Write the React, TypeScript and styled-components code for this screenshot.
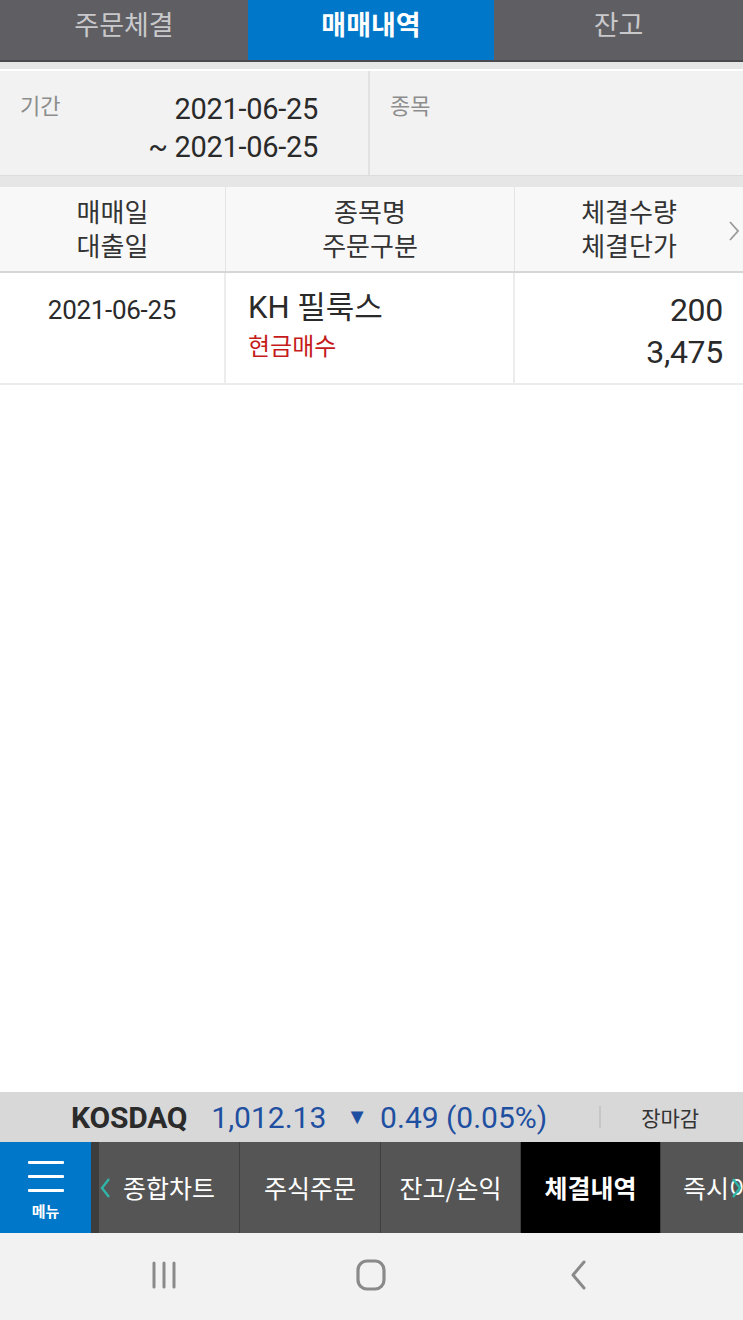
import React from "react";
import styled, { createGlobalStyle } from "styled-components";

const Global = createGlobalStyle`
  html, body { margin: 0; padding: 0; background: #ffffff; }
  body { font-family: Roboto, "Noto Sans CJK KR", sans-serif; }
  * { box-sizing: border-box; }
`;

const Page = styled.div`
  width: 743px;
  height: 1320px;
  display: flex;
  flex-direction: column;
  background: #ffffff;
  overflow: hidden;
`;

const TopTabs = styled.div`
  display: grid;
  grid-template-columns: 248px 246px 1fr;
  height: 62px;
  background: #5f5f63;
  border-bottom: 2px solid #4a4a4e;
`;

const TopTab = styled.div<{ $active?: boolean }>`
  display: flex;
  align-items: center;
  justify-content: center;
  padding-bottom: 14px;
  background: ${(p) => (p.$active ? "#0077c8" : "transparent")};
  color: ${(p) => (p.$active ? "#ffffff" : "#c9c9cc")};
  font-family: "Noto Sans CJK KR", sans-serif;
  font-size: 27px;
  font-weight: ${(p) => (p.$active ? 700 : 400)};
`;

const Gap = styled.div<{ $h: number }>`
  height: ${(p) => p.$h}px;
  background: #e6e6e6;
`;

const Filter = styled.div`
  display: grid;
  grid-template-columns: 370px 1fr;
  height: 107px;
  background: #f2f2f2;
  border-top: 2px solid #ffffff;
  border-bottom: 1px solid #dcdcdc;
`;

const FilterCell = styled.div`
  display: flex;
  justify-content: space-between;
  padding: 19px 50px 0 20px;
  border-right: 2px solid #e2e2e2;
  &:last-child { border-right: none; }
`;

const FilterLabel = styled.div`
  font-family: "Noto Sans CJK KR", sans-serif;
  font-size: 22px;
  color: #8d8d8d;
  line-height: 28px;
`;

const DateStack = styled.div`
  display: flex;
  flex-direction: column;
  align-items: flex-end;
  font-family: Roboto, sans-serif;
  font-size: 29px;
  letter-spacing: -0.3px;
  line-height: 38px;
  color: #2a2a2a;
`;

const Grid = styled.div`
  display: grid;
  grid-template-columns: 226px 289px 1fr;
`;

const HeadRow = styled(Grid)`
  height: 86px;
  background: #f8f8f8;
  border-bottom: 2px solid #d6d6d6;
`;

const HeadCell = styled.div`
  position: relative;
  display: flex;
  flex-direction: column;
  align-items: center;
  justify-content: center;
  border-right: 1px solid #e4e4e4;
  font-family: "Noto Sans CJK KR", sans-serif;
  font-size: 26px;
  line-height: 34px;
  color: #333333;
  padding-bottom: 2px;
  &:last-child { border-right: none; }
`;

const Chevron = styled.svg`
  position: absolute;
  right: 4px;
  top: 34px;
`;

const DataRow = styled(Grid)`
  height: 112px;
  border-bottom: 2px solid #ececec;
`;

const DataCell = styled.div<{ $align: "center" | "left" | "right" }>`
  display: flex;
  flex-direction: column;
  align-items: ${(p) =>
    p.$align === "center" ? "center" : p.$align === "left" ? "flex-start" : "flex-end"};
  padding: ${(p) =>
    p.$align === "center" ? "22px 0 0 0" : p.$align === "left" ? "16px 0 0 22px" : "16px 20px 0 0"};
  border-right: 2px solid #ececec;
  &:last-child { border-right: none; }
`;

const DateText = styled.div`
  font-family: Roboto, sans-serif;
  font-size: 26px;
  letter-spacing: -0.3px;
  color: #2a2a2a;
`;

const StockName = styled.div`
  font-family: Roboto, "Noto Sans CJK KR", sans-serif;
  font-size: 31px;
  line-height: 38px;
  color: #2a2a2a;
`;

const OrderType = styled.div`
  font-family: "Noto Sans CJK KR", sans-serif;
  font-size: 24px;
  line-height: 36px;
  color: #c51a1a;
`;

const Num = styled.div`
  font-family: Roboto, sans-serif;
  font-size: 32px;
  line-height: 42px;
  letter-spacing: -0.3px;
  color: #2a2a2a;
`;

const Spacer = styled.div`
  flex: 1;
`;

const IndexBar = styled.div`
  height: 50px;
  display: flex;
  align-items: center;
  background: #d8d8d8;
  padding-left: 71px;
  font-family: Roboto, sans-serif;
`;

const IndexName = styled.span`
  font-size: 30px;
  font-weight: 700;
  letter-spacing: -0.2px;
  color: #2b2b2b;
  margin-right: 24px;
`;

const IndexValue = styled.span`
  font-size: 30px;
  color: #1f4fa0;
  display: flex;
  align-items: center;
`;

const Tri = styled.span`
  font-size: 22px;
  margin: 0 12px 0 20px;
`;

const Sep = styled.div`
  width: 2px;
  height: 22px;
  background: #c6c6c6;
  margin: 0 40px 0 52px;
`;

const Closed = styled.span`
  font-family: "Noto Sans CJK KR", sans-serif;
  font-size: 21px;
  color: #333333;
`;

const BottomNav = styled.div`
  height: 91px;
  display: flex;
  background: #555555;
`;

const MenuButton = styled.div`
  width: 91px;
  background: #0077c8;
  display: flex;
  flex-direction: column;
  align-items: center;
  justify-content: center;
  gap: 8px;
  padding-top: 6px;
  color: #ffffff;
  font-family: "Noto Sans CJK KR", sans-serif;
  font-size: 15px;
  font-weight: 700;
`;

const Burger = styled.div`
  display: flex;
  flex-direction: column;
  gap: 11px;
  span {
    display: block;
    width: 36px;
    height: 3px;
    background: #ffffff;
    border-radius: 1px;
  }
`;

const NavStrip = styled.div`
  flex: 1;
  display: flex;
  border-left: 8px solid #3d3d3d;
  overflow: hidden;
  position: relative;
`;

const NavItem = styled.div<{ $active?: boolean; $w: number; $lead?: boolean }>`
  flex: 0 0 ${(p) => p.$w}px;
  display: flex;
  align-items: center;
  justify-content: ${(p) => (p.$lead ? "flex-start" : "center")};
  padding-left: ${(p) => (p.$lead ? "22px" : "0")};
  background: ${(p) => (p.$active ? "#000000" : "#555555")};
  border-right: 1px solid #3f3f3f;
  color: #ffffff;
  font-family: "Noto Sans CJK KR", sans-serif;
  font-size: 25px;
  font-weight: ${(p) => (p.$active ? 700 : 400)};
  white-space: nowrap;
  overflow: hidden;
  padding-bottom: 2px;
`;

const Arrow = styled.svg<{ $side: "left" | "right" }>`
  position: absolute;
  top: 35px;
  ${(p) => (p.$side === "left" ? "left: 0px;" : "right: 0px;")}
`;

const SysNav = styled.div`
  height: 87px;
  background: #f2f2f2;
  display: grid;
  grid-template-columns: 1fr 1fr 1fr;
  align-items: center;
  padding: 0 60px;
`;

const SysIcon = styled.div`
  display: flex;
  justify-content: center;
  padding-bottom: 4px;
`;

export default function App() {
  return (
    <Page>
      <Global />
      <TopTabs>
        <TopTab>주문체결</TopTab>
        <TopTab $active>매매내역</TopTab>
        <TopTab>잔고</TopTab>
      </TopTabs>
      <Gap $h={7} />
      <Filter>
        <FilterCell>
          <FilterLabel>기간</FilterLabel>
          <DateStack>
            <span>2021-06-25</span>
            <span>~ 2021-06-25</span>
          </DateStack>
        </FilterCell>
        <FilterCell>
          <FilterLabel>종목</FilterLabel>
        </FilterCell>
      </Filter>
      <Gap $h={11} />
      <HeadRow>
        <HeadCell>
          <span>매매일</span>
          <span>대출일</span>
        </HeadCell>
        <HeadCell>
          <span>종목명</span>
          <span>주문구분</span>
        </HeadCell>
        <HeadCell>
          <span>체결수량</span>
          <span>체결단가</span>
          <Chevron width="10" height="20" viewBox="0 0 10 20">
            <polyline points="1,1 9,10 1,19" fill="none" stroke="#9a9a9a" strokeWidth="1.8" />
          </Chevron>
        </HeadCell>
      </HeadRow>
      <DataRow>
        <DataCell $align="center">
          <DateText>2021-06-25</DateText>
        </DataCell>
        <DataCell $align="left">
          <StockName>KH 필룩스</StockName>
          <OrderType>현금매수</OrderType>
        </DataCell>
        <DataCell $align="right">
          <Num>200</Num>
          <Num>3,475</Num>
        </DataCell>
      </DataRow>
      <Spacer />
      <IndexBar>
        <IndexName>KOSDAQ</IndexName>
        <IndexValue>
          <span>1,012.13</span>
          <Tri>▼</Tri>
          <span>0.49 (0.05%)</span>
        </IndexValue>
        <Sep />
        <Closed>장마감</Closed>
      </IndexBar>
      <BottomNav>
        <MenuButton>
          <Burger>
            <span />
            <span />
            <span />
          </Burger>
          메뉴
        </MenuButton>
        <NavStrip>
          <NavItem $w={141}>종합차트</NavItem>
          <NavItem $w={141}>주식주문</NavItem>
          <NavItem $w={140}>잔고/손익</NavItem>
          <NavItem $w={140} $active>
            체결내역
          </NavItem>
          <NavItem $w={140} $lead>
            즉시이체
          </NavItem>
          <Arrow $side="left" width="12" height="22" viewBox="0 0 12 22">
            <polyline points="10,2 3,11 10,20" fill="none" stroke="#2fb5a8" strokeWidth="2.4" />
          </Arrow>
          <Arrow $side="right" width="12" height="22" viewBox="0 0 12 22">
            <polyline points="2,2 9,11 2,20" fill="none" stroke="#2fb5a8" strokeWidth="2.4" />
          </Arrow>
        </NavStrip>
      </BottomNav>
      <SysNav>
        <SysIcon>
          <svg width="30" height="30" viewBox="0 0 30 30">
            <g stroke="#8a8a8a" strokeWidth="3" strokeLinecap="round">
              <line x1="5" y1="3" x2="5" y2="27" />
              <line x1="15" y1="3" x2="15" y2="27" />
              <line x1="25" y1="3" x2="25" y2="27" />
            </g>
          </svg>
        </SysIcon>
        <SysIcon>
          <svg width="32" height="32" viewBox="0 0 32 32">
            <rect x="3" y="2" width="26" height="28" rx="9" fill="none" stroke="#8a8a8a" strokeWidth="3.2" />
          </svg>
        </SysIcon>
        <SysIcon>
          <svg width="20" height="32" viewBox="0 0 20 32">
            <polyline points="15,3 4,16 15,29" fill="none" stroke="#8a8a8a" strokeWidth="3" strokeLinecap="round" strokeLinejoin="round" />
          </svg>
        </SysIcon>
      </SysNav>
    </Page>
  );
}
